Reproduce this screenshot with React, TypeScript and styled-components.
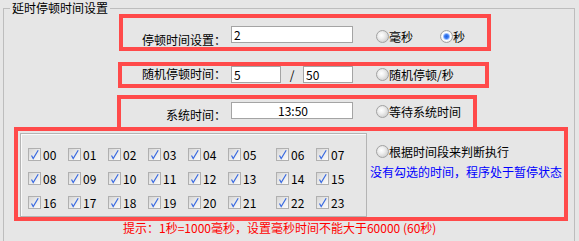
import React from "react";
import styled, { createGlobalStyle } from "styled-components";

const Global = createGlobalStyle`
  html, body {
    margin: 0;
    padding: 0;
    background: #e6e6e6;
    height: 241px;
    overflow: hidden;
  }
  body {
    font-family: "Noto Sans CJK SC", "Noto Sans", sans-serif;
    font-size: 12px;
    color: #000;
  }
`;

const Screen = styled.div`
  height: 241px;
  overflow: hidden;
`;

const GroupBox = styled.fieldset`
  margin: 2px 4px 0 3px;
  padding: 0;
  height: 250px;
  border: 1px solid #bdbdbd;
  box-sizing: border-box;
  min-width: 0;
`;

const Legend = styled.legend`
  margin-left: 6px;
  padding: 0 2px;
  font-size: 12px;
  line-height: 12px;
  height: 12px;
`;

const Highlight = styled.div<{ $left: number; $width: number; $height: number; $top: number }>`
  margin-left: ${(p) => p.$left}px;
  margin-top: ${(p) => p.$top}px;
  width: ${(p) => p.$width}px;
  height: ${(p) => p.$height}px;
  border: 4px solid #ff4a4a;
  box-sizing: border-box;
  display: flex;
  align-items: flex-start;
`;

const FieldLabel = styled.span<{ $width: number; $offset: number }>`
  width: ${(p) => p.$width}px;
  margin-top: ${(p) => p.$offset}px;
  text-align: right;
  line-height: 14px;
  white-space: nowrap;
  flex: none;
`;

const TextBox = styled.div<{ $width: number; $offset: number; $center?: boolean }>`
  width: ${(p) => p.$width}px;
  height: 17px;
  margin-top: ${(p) => p.$offset}px;
  background: #fff;
  border: 1px solid #a4a4a4;
  box-sizing: border-box;
  line-height: 15px;
  padding-left: 2px;
  text-align: ${(p) => (p.$center ? "center" : "left")};
  flex: none;
`;

const InputGroup = styled.div`
  display: flex;
  align-items: center;
  margin-left: 5px;
`;

const Slash = styled.span`
  width: 22px;
  text-align: center;
  line-height: 17px;
`;

const RadioWrap = styled.label<{ $offset: number; $gap: number }>`
  display: flex;
  align-items: center;
  height: 13px;
  margin-top: ${(p) => p.$offset}px;
  margin-left: ${(p) => p.$gap}px;
  line-height: 14px;
  white-space: nowrap;
`;

const RadioCircle = styled.span<{ $checked?: boolean }>`
  width: 13px;
  height: 13px;
  border-radius: 50%;
  box-sizing: border-box;
  border: 1px solid #a2a2a2;
  background: ${(p) =>
    p.$checked
      ? "radial-gradient(circle at 50% 50%, #1f5fe0 0, #3f7ff0 2px, #9fc0ff 3px, #ffffff 4px, #e8e8e8 6px)"
      : "radial-gradient(circle at 40% 40%, #ffffff 0, #f0f0f0 3px, #d2d2d2 7px)"};
  flex: none;
`;

const Radio = ({
  text,
  checked,
  offset,
  gap,
}: {
  text: string;
  checked?: boolean;
  offset: number;
  gap: number;
}) => (
  <RadioWrap $offset={offset} $gap={gap}>
    <RadioCircle $checked={checked} />
    <span>{text}</span>
  </RadioWrap>
);

const Panel = styled.div`
  margin: 2px 0 0 2px;
  width: 347px;
  height: 84px;
  box-sizing: border-box;
  border: 1px solid #b4b4b4;
  box-shadow: inset 1px 1px 0 #fafafa;
  padding: 14px 0 0 7px;
  flex: none;
`;

const CheckGrid = styled.div`
  display: grid;
  grid-template-columns: 40px 40px 40px 40px 40px 48px 40px 40px;
  grid-auto-rows: 13px;
  row-gap: 11px;
`;

const CheckItem = styled.label`
  display: flex;
  align-items: center;
  gap: 2px;
  line-height: 13px;
`;

const CheckBox = styled.span`
  width: 13px;
  height: 13px;
  box-sizing: border-box;
  border: 1px solid #b0b0b0;
  background: linear-gradient(135deg, #d6d6d6 0%, #ececec 55%, #fbfbfb 100%);
  display: flex;
  flex: none;
`;

const SideColumn = styled.div`
  display: flex;
  flex-direction: column;
  padding-left: 3px;
`;

const Notice = styled.span`
  color: #0000ff;
  line-height: 14px;
  margin-top: 7px;
  white-space: nowrap;
`;

const Tip = styled.div`
  color: #ff0000;
  margin-left: 119px;
  line-height: 14px;
  white-space: pre;
`;

const Check = () => (
  <CheckBox>
    <svg width="11" height="11" viewBox="0 0 11 11">
      <polyline points="2.5,6.5 4.2,9.6 9.2,1.2" fill="none" stroke="#3a6ae0" strokeWidth="1.2" />
    </svg>
  </CheckBox>
);

const hours = Array.from({ length: 24 }, (_, i) => String(i).padStart(2, "0"));

export default function App() {
  return (
    <Screen>
      <Global />
      <GroupBox>
        <Legend>延时停顿时间设置</Legend>

        <Highlight $left={115} $top={0} $width={372} $height={37}>
          <FieldLabel $width={103} $offset={15}>停顿时间设置：</FieldLabel>
          <InputGroup>
            <TextBox $width={122} $offset={8}>2</TextBox>
          </InputGroup>
          <Radio text="毫秒" offset={12} gap={23} />
          <Radio text="秒" checked offset={12} gap={27} />
        </Highlight>

        <Highlight $left={114} $top={11} $width={371} $height={26}>
          <FieldLabel $width={104} $offset={1}>随机停顿时间：</FieldLabel>
          <InputGroup>
            <TextBox $width={50} $offset={0}>5</TextBox>
            <Slash>/</Slash>
            <TextBox $width={50} $offset={0}>50</TextBox>
          </InputGroup>
          <Radio text="随机停顿/秒" offset={2} gap={23} />
        </Highlight>

        <Highlight $left={113} $top={7} $width={360} $height={36}>
          <FieldLabel $width={105} $offset={9}>系统时间：</FieldLabel>
          <InputGroup>
            <TextBox $width={122} $offset={3} $center>13:50</TextBox>
          </InputGroup>
          <Radio text="等待系统时间" offset={6} gap={23} />
        </Highlight>

        <Highlight $left={10} $top={-4} $width={554} $height={94}>
          <Panel>
            <CheckGrid>
              {hours.map((h) => (
                <CheckItem key={h}>
                  <Check />
                  <span>{h}</span>
                </CheckItem>
              ))}
            </CheckGrid>
          </Panel>
          <SideColumn>
            <Radio text="根据时间段来判断执行" offset={14} gap={6} />
            <Notice>没有勾选的时间，程序处于暂停状态</Notice>
          </SideColumn>
        </Highlight>

        <Tip>提示：1秒=1000毫秒，设置毫秒时间不能大于60000 (60秒)</Tip>
      </GroupBox>
    </Screen>
  );
}
